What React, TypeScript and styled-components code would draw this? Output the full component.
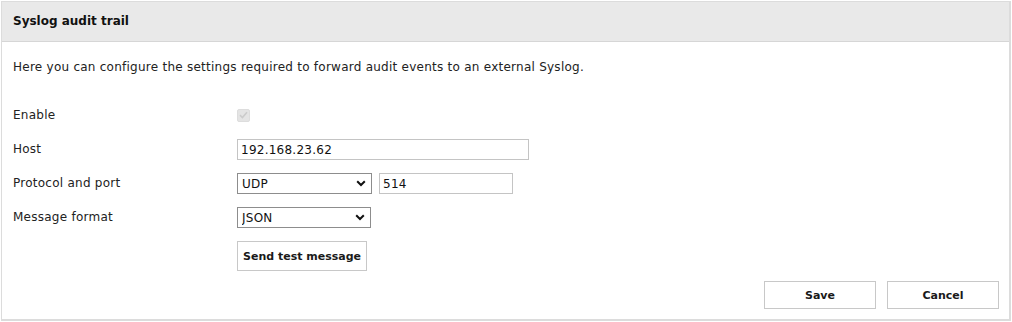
import React from "react";
import styled, { createGlobalStyle } from "styled-components";

const Global = createGlobalStyle`
  html, body { margin: 0; padding: 0; background: #ffffff; }
  body {
    font-family: "DejaVu Sans", Verdana, sans-serif;
    font-size: 12px;
    letter-spacing: 0.25px;
    color: #222222;
  }
  #root { padding: 1px 1px 0 1px; }
`;

const Panel = styled.section`
  width: 1010px;
  box-sizing: border-box;
  border: 1px solid #dcdcdc;
  border-right-width: 2px;
  border-bottom-width: 2px;
  background: #ffffff;
`;

const Header = styled.header`
  height: 40px;
  box-sizing: border-box;
  display: flex;
  align-items: center;
  padding: 0 11px 1px 11px;
  background: #e9e9e9;
  border-bottom: 1px solid #d6d6d6;
  font-weight: bold;
  font-size: 12px;
  letter-spacing: 0;
  color: #111111;
`;

const Body = styled.div`
  padding: 18px 10px 10px 11px;
`;

const Description = styled.p`
  margin: 0 0 24px 0;
  line-height: 14px;
`;

const Form = styled.div`
  display: grid;
  grid-template-columns: 224px 1fr;
  grid-auto-rows: 34px;
  align-items: center;
`;

const Label = styled.div`
  line-height: 14px;
`;

const Field = styled.div`
  display: flex;
  align-items: center;
  gap: 7px;
`;

const CheckBox = styled.span`
  display: inline-flex;
  align-items: center;
  justify-content: center;
  width: 13px;
  height: 13px;
  border-radius: 2px;
  background: #e4e4e4;
  border: 1px solid #dddddd;
  box-sizing: border-box;
`;

const TextInput = styled.input<{ $w: number }>`
  width: ${(p) => p.$w}px;
  height: 21px;
  margin-top: 1px;
  box-sizing: border-box;
  border: 1px solid #c4c4c4;
  padding: 0 3px;
  font-family: "DejaVu Sans", Verdana, sans-serif;
  font-size: 12px;
  letter-spacing: 0.25px;
  color: #111111;
  outline: none;
  background: #ffffff;
`;

const SelectWrap = styled.div<{ $w: number }>`
  position: relative;
  width: ${(p) => p.$w}px;
  height: 21px;
  margin-top: 1px;
`;

const Select = styled.select`
  appearance: none;
  width: 100%;
  height: 100%;
  box-sizing: border-box;
  border: 1px solid #8d8d8d;
  border-radius: 0;
  padding: 0 4px;
  font-family: "DejaVu Sans", Verdana, sans-serif;
  font-size: 12px;
  letter-spacing: 0.25px;
  color: #111111;
  background: #ffffff;
  outline: none;
`;

const Chevron = styled.svg`
  position: absolute;
  right: 6px;
  top: 7px;
  pointer-events: none;
`;

const TestButton = styled.button`
  margin-top: 14px;
  height: 30px;
  padding: 0 5px;
  box-sizing: border-box;
  border: 1px solid #c8c8c8;
  background: #ffffff;
  font-family: "DejaVu Sans", Verdana, sans-serif;
  font-size: 11px;
  font-weight: bold;
  color: #1a1a1a;
`;

const Actions = styled.div`
  display: flex;
  justify-content: flex-end;
  gap: 11px;
  margin-top: 10px;
`;

const ActionButton = styled.button`
  width: 112px;
  height: 28px;
  box-sizing: border-box;
  border: 1px solid #c8c8c8;
  background: #ffffff;
  font-family: "DejaVu Sans", Verdana, sans-serif;
  font-size: 11px;
  font-weight: bold;
  color: #1a1a1a;
`;

const ButtonRow = styled.div`
  display: grid;
  grid-template-columns: 224px 1fr;
  margin-top: -7px;
`;

const ChevronIcon = () => (
  <Chevron width="10" height="7" viewBox="0 0 10 7">
    <path d="M1.2 1.2 L5 5 L8.8 1.2" fill="none" stroke="#111" strokeWidth="2" />
  </Chevron>
);

export default function App() {
  return (
    <>
      <Global />
      <Panel>
        <Header>Syslog audit trail</Header>
        <Body>
          <Description>
            Here you can configure the settings required to forward audit events to an external Syslog.
          </Description>
          <Form>
            <Label>Enable</Label>
            <Field>
              <CheckBox>
                <svg width="9" height="8" viewBox="0 0 9 8">
                  <path d="M1 4.2 L3.4 6.5 L8 1.2" fill="none" stroke="#cbcbcb" strokeWidth="1.6" />
                </svg>
              </CheckBox>
            </Field>
            <Label>Host</Label>
            <Field>
              <TextInput $w={292} defaultValue="192.168.23.62" />
            </Field>
            <Label>Protocol and port</Label>
            <Field>
              <SelectWrap $w={135}>
                <Select defaultValue="UDP">
                  <option>UDP</option>
                  <option>TCP</option>
                </Select>
                <ChevronIcon />
              </SelectWrap>
              <TextInput $w={134} defaultValue="514" />
            </Field>
            <Label>Message format</Label>
            <Field>
              <SelectWrap $w={134}>
                <Select defaultValue="JSON">
                  <option>JSON</option>
                  <option>CEF</option>
                </Select>
                <ChevronIcon />
              </SelectWrap>
            </Field>
          </Form>
          <ButtonRow>
            <span />
            <Field>
              <TestButton>Send test message</TestButton>
            </Field>
          </ButtonRow>
          <Actions>
            <ActionButton>Save</ActionButton>
            <ActionButton>Cancel</ActionButton>
          </Actions>
        </Body>
      </Panel>
    </>
  );
}
